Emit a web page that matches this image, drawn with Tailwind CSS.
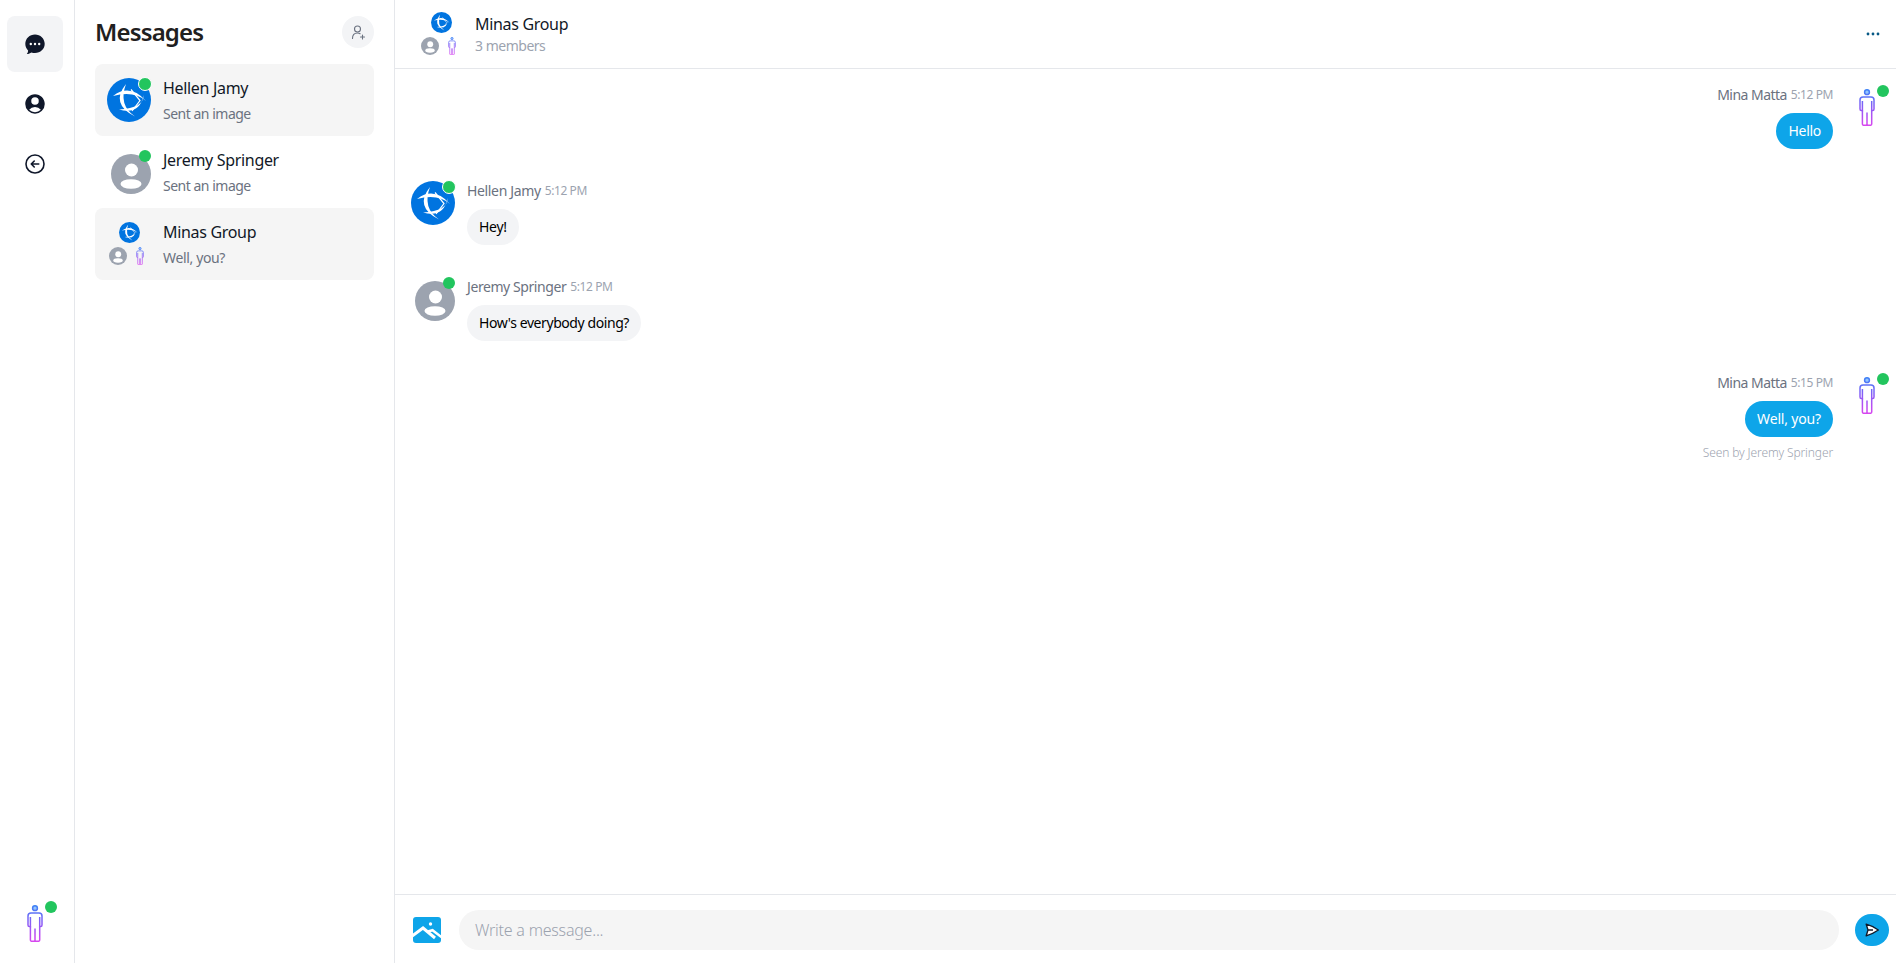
<!doctype html>
<html lang="en">
<head>
<meta charset="utf-8">
<script src="https://cdn.jsdelivr.net/npm/@tailwindcss/browser@4"></script>
<title>Messages</title>
</head>
<body class="bg-white font-['Noto_Sans',sans-serif] text-[#111827] overflow-hidden">
<svg width="0" height="0" class="absolute">
  <defs>
    <linearGradient id="pg" gradientUnits="userSpaceOnUse" x1="8" y1="0" x2="8" y2="37">
      <stop offset="0" stop-color="#3b82f6"/><stop offset="0.5" stop-color="#8b5cf6"/><stop offset="1" stop-color="#d946ef"/>
    </linearGradient>
    <symbol id="person" viewBox="0 0 16 37">
      <g fill="none" stroke="url(#pg)" stroke-width="1.500">
        <circle cx="8" cy="3.200" r="2.400" fill="#93c5fd"/>
        <path d="M1 20V11Q1 8 4 8H12Q15 8 15 11V20Q15 21.500 13.800 21.500H12.700V12M1 20Q1 21.500 2.200 21.500H3.400V12"/>
        <path d="M3.400 21.500V35Q3.400 36.300 4.800 36.300H6.800Q8 36.300 8 35V23.500V35Q8 36.300 9.200 36.300H11.200Q12.700 36.300 12.700 35V21.500"/>
      </g>
    </symbol>
    <symbol id="bnet" viewBox="0 0 44 44">
      <circle cx="22" cy="22" r="22" fill="#0074e0"/>
      <g fill="#fff">
        <path d="M6 18Q23 5 39 23Q27 12.500 6 18Z"/>
        <path d="M19 6Q3 26 28 38.500Q11 27 19 6Z"/>
        <path d="M36.500 17Q37 30 12 31.500Q33 37 36.500 17Z"/>
      </g>
      <path d="M24 11.500L33 22.500L25 33" fill="none" stroke="#fff" stroke-width="1.200"/>
    </symbol>
    <symbol id="gray" viewBox="0 0 40 40">
      <circle cx="20" cy="20" r="20" fill="#9ca3af"/>
      <circle cx="20.500" cy="16" r="6.500" fill="#fff"/>
      <ellipse cx="20" cy="30" rx="10.500" ry="4.800" fill="#fff"/>
    </symbol>
  </defs>
</svg>

<div class="flex h-[963px] w-[1896px]">
  <!-- Rail -->
  <nav class="flex w-[75px] shrink-0 flex-col items-center border-r border-[#e5e7eb] pt-4 pb-[18px] pr-[4px]">
    <button class="flex h-14 w-14 items-center justify-center rounded-lg bg-[#f3f4f6]">
      <svg class="h-6 w-6" viewBox="0 0 24 24" fill="#0f172a"><path d="M12 2.500c5.400 0 9.700 4.100 9.700 9.300s-4.300 9.300-9.700 9.300c-1.300 0-2.500-.2-3.600-.6-1.100.9-2.700 1.500-4.600 1.500.8-1 1.300-2.200 1.300-3.600-1.700-1.600-2.800-4-2.800-6.600 0-5.200 4.300-9.300 9.700-9.300z"/><circle cx="7.800" cy="12" r="1.200" fill="#fff"/><circle cx="12" cy="12" r="1.200" fill="#fff"/><circle cx="16.200" cy="12" r="1.200" fill="#fff"/></svg>
    </button>
    <button class="mt-1 flex h-14 w-14 items-center justify-center">
      <svg class="h-6 w-6" viewBox="0 0 24 24" fill="#0f172a"><path fill-rule="evenodd" clip-rule="evenodd" d="M18.685 19.097A9.723 9.723 0 0021.750 12c0-5.385-4.365-9.750-9.750-9.750S2.250 6.615 2.250 12a9.723 9.723 0 003.065 7.097A9.716 9.716 0 0012 21.750a9.716 9.716 0 006.685-2.653zm-12.540-1.285A7.486 7.486 0 0112 15a7.486 7.486 0 015.855 2.812A8.224 8.224 0 0112 20.250a8.224 8.224 0 01-5.855-2.438zM15.750 9a3.750 3.750 0 11-7.500 0 3.750 3.750 0 017.500 0z"/></svg>
    </button>
    <button class="mt-1 flex h-14 w-14 items-center justify-center">
      <svg class="h-6 w-6" viewBox="0 0 24 24" fill="none" stroke="#0f172a" stroke-width="1.600" stroke-linecap="round" stroke-linejoin="round"><path d="M11.250 9l-3 3m0 0l3 3m-3-3h7.500M21 12a9 9 0 11-18 0 9 9 0 0118 0z"/></svg>
    </button>
    <div class="relative mt-auto flex h-11 w-11 items-center justify-center">
      <svg class="h-[37px] w-4"><use href="#person"/></svg>
      <span class="absolute right-0 top-0 h-3 w-3 rounded-full bg-[#22c55e]"></span>
    </div>
  </nav>

  <!-- Conversations -->
  <aside class="w-[320px] shrink-0 border-r border-[#e5e7eb] px-5">
    <div class="flex h-16 items-start justify-between pt-4">
      <h1 class="text-2xl leading-8 font-semibold tracking-[-0.035em] text-[#1f2020]">Messages</h1>
      <button class="flex h-8 w-8 items-center justify-center rounded-full bg-[#f3f4f6]">
        <svg class="h-4 w-4" viewBox="0 0 16 16" fill="none" stroke="#6b7280" stroke-width="1.100" stroke-linecap="round"><circle cx="7.500" cy="5" r="3"/><path d="M2.500 14.500c0-3.500 2-5.500 5-5.500 1 0 1.900.2 2.600.7M12.500 11v4M10.500 13h4"/></svg>
      </button>
    </div>
    <ul>
      <li class="flex h-[72px] items-center gap-3 rounded-lg bg-[#f5f5f5] px-3">
        <div class="relative h-11 w-11 shrink-0">
          <svg class="h-11 w-11"><use href="#bnet"/></svg>
          <span class="absolute -right-px -top-px h-3.5 w-3.5 rounded-full border border-white bg-[#22c55e]"></span>
        </div>
        <div>
          <p class="text-base leading-6 tracking-[-0.02em]">Hellen Jamy</p>
          <p class="mt-1 text-sm leading-5 tracking-[-0.035em] text-[#6b7280]">Sent an image</p>
        </div>
      </li>
      <li class="flex h-[72px] items-center gap-3 rounded-lg px-3">
        <div class="relative flex h-11 w-11 shrink-0 items-end justify-end">
          <svg class="h-10 w-10"><use href="#gray"/></svg>
          <span class="absolute right-0 top-0 h-3 w-3 rounded-full bg-[#22c55e]"></span>
        </div>
        <div>
          <p class="text-base leading-6 tracking-[-0.02em]">Jeremy Springer</p>
          <p class="mt-1 text-sm leading-5 tracking-[-0.035em] text-[#6b7280]">Sent an image</p>
        </div>
      </li>
      <li class="flex h-[72px] items-center gap-3 rounded-lg bg-[#f5f5f5] px-3">
        <div class="grid h-11 w-11 shrink-0 grid-cols-2 grid-rows-2">
          <div class="col-span-2 flex justify-center"><svg class="h-[21px] w-[21px]"><use href="#bnet"/></svg></div>
          <div class="flex items-center justify-center pt-0.5"><svg class="h-[18px] w-[18px]"><use href="#gray"/></svg></div>
          <div class="flex items-center justify-center pt-0.5"><svg class="h-[18px] w-2"><use href="#person"/></svg></div>
        </div>
        <div>
          <p class="text-base leading-6 tracking-[-0.02em]">Minas Group</p>
          <p class="mt-1 text-sm leading-5 tracking-[-0.025em] text-[#6b7280]">Well, you?</p>
        </div>
      </li>
    </ul>
  </aside>

  <!-- Chat -->
  <main class="flex min-w-0 flex-1 flex-col">
    <header class="flex h-[69px] shrink-0 items-center border-b border-[#e5e7eb] pl-6 pr-4">
      <div class="grid h-11 w-11 shrink-0 grid-cols-2 grid-rows-2">
        <div class="col-span-2 flex justify-center"><svg class="h-[21px] w-[21px]"><use href="#bnet"/></svg></div>
        <div class="flex items-center justify-center pt-0.5"><svg class="h-[18px] w-[18px]"><use href="#gray"/></svg></div>
        <div class="flex items-center justify-center pt-0.5"><svg class="h-[18px] w-2"><use href="#person"/></svg></div>
      </div>
      <div class="ml-3">
        <p class="text-base leading-6 tracking-[-0.02em]">Minas Group</p>
        <p class="text-sm leading-5 tracking-[-0.035em] text-[#9ca3af]">3 members</p>
      </div>
      <button class="ml-auto mr-[-1px] flex h-4 w-4 items-center justify-center">
        <svg class="h-4 w-4" viewBox="0 0 16 16" fill="#075985"><circle cx="3" cy="8" r="1.400"/><circle cx="8" cy="8" r="1.400"/><circle cx="13" cy="8" r="1.400"/></svg>
      </button>
    </header>

    <section class="flex min-h-0 flex-1 flex-col gap-8 pl-4 pr-[7px] pt-4">
      <article class="flex justify-end gap-3">
        <div class="flex flex-col items-end">
          <div class="flex h-5 items-center gap-1"><span class="text-sm tracking-[-0.038em] text-[#6b7280]">Mina Matta</span><span class="text-xs tracking-[-0.035em] text-[#9ca3af]">5:12 PM</span></div>
          <p class="mt-2 rounded-full bg-[#0ea5e9] px-3 py-2 text-sm leading-5 tracking-[-0.02em] text-white">Hello</p>
        </div>
        <div class="relative flex h-11 w-11 items-center justify-center">
          <svg class="h-[37px] w-4"><use href="#person"/></svg>
          <span class="absolute right-0 top-0 h-3 w-3 rounded-full bg-[#22c55e]"></span>
        </div>
      </article>

      <article class="flex gap-3">
        <div class="relative h-11 w-11">
          <svg class="h-11 w-11"><use href="#bnet"/></svg>
          <span class="absolute -right-px -top-px h-3.5 w-3.5 rounded-full border border-white bg-[#22c55e]"></span>
        </div>
        <div class="flex flex-col items-start">
          <div class="flex h-5 items-center gap-1"><span class="text-sm tracking-[-0.025em] text-[#6b7280]">Hellen Jamy</span><span class="text-xs tracking-[-0.035em] text-[#9ca3af]">5:12 PM</span></div>
          <p class="mt-2 rounded-full bg-[#f3f4f6] px-3 py-2 text-sm leading-5 tracking-[-0.02em] text-black">Hey!</p>
        </div>
      </article>

      <article class="flex gap-3">
        <div class="relative flex h-11 w-11 items-end justify-end">
          <svg class="h-10 w-10"><use href="#gray"/></svg>
          <span class="absolute right-0 top-0 h-3 w-3 rounded-full bg-[#22c55e]"></span>
        </div>
        <div class="flex flex-col items-start">
          <div class="flex h-5 items-center gap-1"><span class="text-sm tracking-[-0.03em] text-[#6b7280]">Jeremy Springer</span><span class="text-xs tracking-[-0.035em] text-[#9ca3af]">5:12 PM</span></div>
          <p class="mt-2 rounded-full bg-[#f3f4f6] px-3 py-2 text-sm leading-5 tracking-[-0.03em] text-black">How's everybody doing?</p>
        </div>
      </article>

      <article class="flex justify-end gap-3">
        <div class="flex flex-col items-end">
          <div class="flex h-5 items-center gap-1"><span class="text-sm tracking-[-0.038em] text-[#6b7280]">Mina Matta</span><span class="text-xs tracking-[-0.035em] text-[#9ca3af]">5:15 PM</span></div>
          <p class="mt-2 rounded-full bg-[#0ea5e9] px-3 py-2 text-sm leading-5 tracking-[-0.012em] text-white">Well, you?</p>
          <p class="mt-2 text-xs font-light tracking-[-0.01em] text-[#9ca3af]">Seen by Jeremy Springer</p>
        </div>
        <div class="relative flex h-11 w-11 items-center justify-center">
          <svg class="h-[37px] w-4"><use href="#person"/></svg>
          <span class="absolute right-0 top-0 h-3 w-3 rounded-full bg-[#22c55e]"></span>
        </div>
      </article>
    </section>

    <footer class="flex h-[69px] shrink-0 items-center gap-4 border-t border-[#e5e7eb] pl-[18px] pr-[7px] pt-[2px]">
      <svg class="mr-0.5 h-[26px] w-7 shrink-0" viewBox="0 0 28 26"><rect width="28" height="26" rx="3" fill="#0ea5e9"/><circle cx="17.500" cy="7" r="1.700" fill="#fff"/><path d="M-1 19L10 11L22 21" fill="none" stroke="#fff" stroke-width="3"/><path d="M15 14.500L19.500 13.200L29 20.500" fill="none" stroke="#fff" stroke-width="2.500"/></svg>
      <div class="flex h-10 flex-1 items-center rounded-full bg-[#f5f5f5] px-4 text-base font-light tracking-[-0.014em] text-[#9ca3af]">Write a message...</div>
      <button class="flex h-8 w-[34px] shrink-0 items-center justify-center rounded-full bg-[#0ea5e9]">
        <svg class="h-4 w-4" viewBox="0 0 24 24" fill="#fff" stroke="#111827" stroke-width="2" stroke-linejoin="round"><path d="M6 12L3.300 3.300A60 60 0 0121.500 12 60 60 0 013.300 20.700L6 12zm0 0h7.500"/></svg>
      </button>
    </footer>
  </main>
</div>
</body>
</html>
